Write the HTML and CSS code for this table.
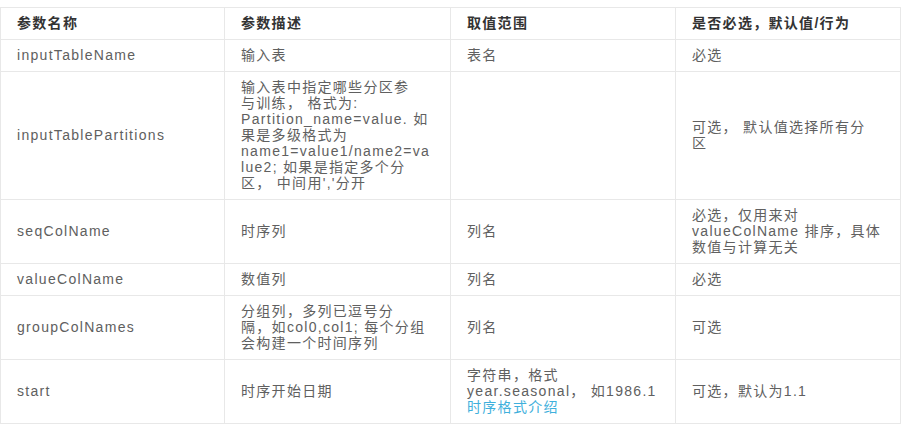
FILE: index.html
```html
<!DOCTYPE html>
<html lang="zh">
<head>
<meta charset="utf-8">
<title>参数说明</title>
<link rel="stylesheet" href="styles.css">
</head>
<body>
<table class="params">
  <colgroup>
    <col class="c1"><col class="c2"><col class="c3"><col class="c4">
  </colgroup>
  <thead>
    <tr><th>参数名称</th><th>参数描述</th><th>取值范围</th><th>是否必选，默认值/行为</th></tr>
  </thead>
  <tbody>
    <tr><td>inputTableName</td><td>输入表</td><td>表名</td><td>必选</td></tr>
    <tr>
      <td>inputTablePartitions</td>
      <td>输入表中指定哪些分区参<br>与训练， 格式为:<br>Partition_name=value. 如<br>果是多级格式为<br>name1=value1/name2=va<br>lue2; 如果是指定多个分<br>区， 中间用','分开</td>
      <td></td>
      <td>可选， 默认值选择所有分<br>区</td>
    </tr>
    <tr><td>seqColName</td><td>时序列</td><td>列名</td><td>必选，仅用来对<br>valueColName 排序，具体<br>数值与计算无关</td></tr>
    <tr><td>valueColName</td><td>数值列</td><td>列名</td><td>必选</td></tr>
    <tr><td>groupColNames</td><td>分组列，多列已逗号分<br>隔，如col0,col1; 每个分组<br>会构建一个时间序列</td><td>列名</td><td>可选</td></tr>
    <tr><td>start</td><td>时序开始日期</td><td>字符串，格式<br>year.seasonal， 如1986.1<br><a class="link" href="#">时序格式介绍</a></td><td>可选，默认为1.1</td></tr>
  </tbody>
</table>
</body>
</html>
```
FILE: styles.css
```css
html, body {
  margin: 0;
  padding: 0;
  background: #ffffff;
}
body {
  padding-top: 7px;
  font-family: "Liberation Sans", "Noto Sans CJK SC", sans-serif;
}
.params {
  border-collapse: collapse;
  table-layout: fixed;
  width: 900px;
  font-size: 14px;
  letter-spacing: 1.3px;
  line-height: 16px;
  color: #606060;
}
.c1 { width: 224px; }
.c2 { width: 226px; }
.c3 { width: 225px; }
.c4 { width: 225px; }
.params th,
.params td {
  border: 1px solid #e8e8e8;
  padding: 7px 12px 8px 16px;
  text-align: left;
  vertical-align: middle;
  white-space: nowrap;
}
.params th {
  font-weight: bold;
  color: #333333;
}
.link {
  color: #3fb0dc;
  text-decoration: none;
}
```
